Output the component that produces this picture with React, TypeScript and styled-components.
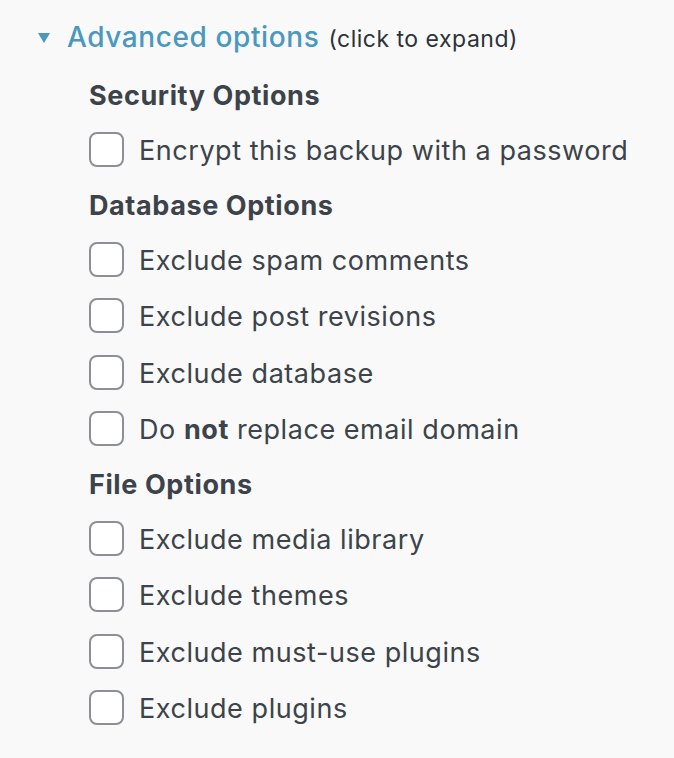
import * as React from "react";
import styled, { createGlobalStyle } from "styled-components";

const GlobalStyle = createGlobalStyle`
  html, body {
    margin: 0;
    padding: 0;
    background: #f9f9f9;
  }
  body {
    font-family: Inter, "Noto Sans", "Liberation Sans", sans-serif;
    color: #3c434a;
  }
`;

const Page = styled.div`
  padding: 8px 0 0 38px;
`;

const Toggle = styled.div`
  display: flex;
  align-items: center;
  height: 58px;
  cursor: pointer;
`;

const Arrow = styled.span`
  width: 0;
  height: 0;
  border-left: 6px solid transparent;
  border-right: 6px solid transparent;
  border-top: 10px solid #4a98c0;
  margin-right: 17px;
  margin-top: 2px;
`;

const ToggleTitle = styled.span`
  font-size: 28px;
  font-weight: 500;
  color: #4a98c0;
  letter-spacing: 0.6px;
`;

const ToggleHint = styled.span`
  font-size: 23px;
  color: #2c3338;
  margin-left: 9px;
  margin-top: 3px;
  letter-spacing: 0.5px;
`;

const Body = styled.div`
  margin-top: 2px;
  padding-left: 51px;
  display: flex;
  flex-direction: column;
`;

const GroupTitle = styled.div`
  height: 54px;
  display: flex;
  align-items: center;
  font-size: 27px;
  font-weight: 700;
  letter-spacing: 0.6px;
  color: #3c434a;
`;

const Row = styled.label`
  height: 56.3px;
  display: flex;
  align-items: center;
  font-size: 27px;
  letter-spacing: 0.55px;
  color: #3c434a;
`;

const Box = styled.input.attrs({ type: "checkbox" })`
  appearance: none;
  margin: -2px 15px 0 0;
  width: 35px;
  height: 35px;
  box-sizing: border-box;
  border: 2px solid #8c8f94;
  border-radius: 8px;
  background: #fff;
  flex: none;
`;

type Group = { title: string; items: React.ReactNode[] };

const groups: Group[] = [
  { title: "Security Options", items: ["Encrypt this backup with a password"] },
  {
    title: "Database Options",
    items: [
      "Exclude spam comments",
      "Exclude post revisions",
      "Exclude database",
      <>
        Do <b>not</b> replace email domain
      </>,
    ],
  },
  {
    title: "File Options",
    items: [
      "Exclude media library",
      "Exclude themes",
      "Exclude must-use plugins",
      "Exclude plugins",
    ],
  },
];

export default function App() {
  return (
    <Page>
      <GlobalStyle />
      <Toggle>
        <Arrow />
        <ToggleTitle>Advanced options</ToggleTitle>
        <ToggleHint>(click to expand)</ToggleHint>
      </Toggle>
      <Body>
        {groups.map((g) => (
          <React.Fragment key={g.title}>
            <GroupTitle>{g.title}</GroupTitle>
            {g.items.map((item, i) => (
              <Row key={i}>
                <Box />
                <span>{item}</span>
              </Row>
            ))}
          </React.Fragment>
        ))}
      </Body>
    </Page>
  );
}
